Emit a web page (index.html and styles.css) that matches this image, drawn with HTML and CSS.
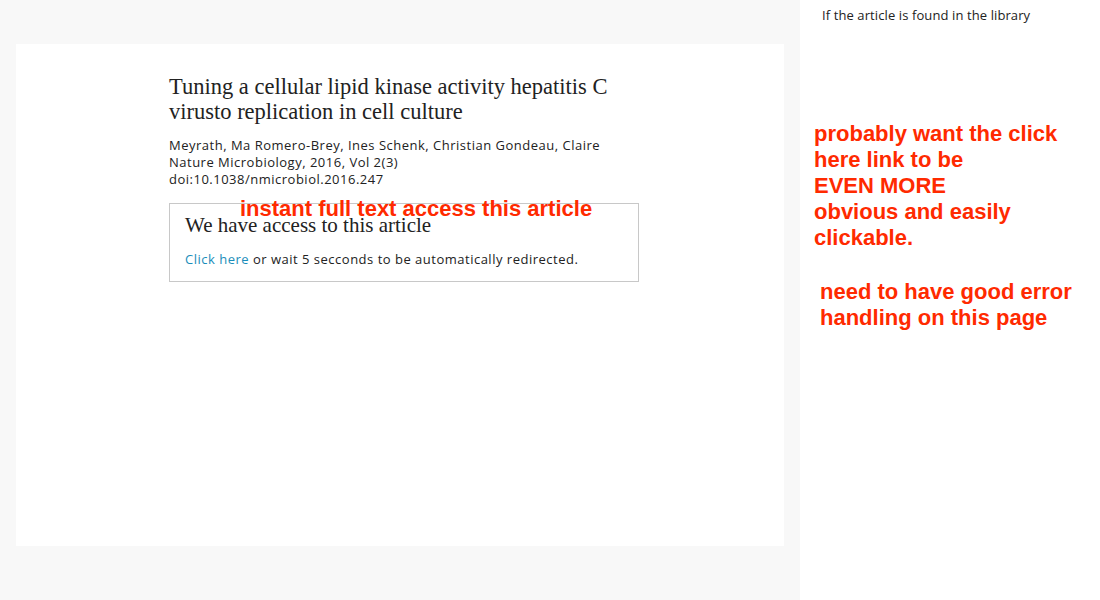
FILE: index.html
```html
<!DOCTYPE html>
<html>
<head>
<meta charset="utf-8">
<link rel="stylesheet" href="styles.css">
</head>
<body>
<div class="page">
  <main class="main">
    <section class="card">
      <div class="article">
        <h1 class="title">Tuning a cellular lipid kinase activity hepatitis C virusto replication in cell culture</h1>
        <div class="meta">
          <div>Meyrath, Ma Romero-Brey, Ines Schenk, Christian Gondeau, Claire</div>
          <div>Nature Microbiology, 2016, Vol 2(3)</div>
          <div>doi:10.1038/nmicrobiol.2016.247</div>
        </div>
        <div class="access">
          <span class="note note-box">instant full text access this article</span>
          <h2 class="access-title">We have access to this article</h2>
          <p class="access-text"><a class="link" href="#">Click here</a> or wait 5 secconds to be automatically redirected.</p>
        </div>
      </div>
    </section>
  </main>
  <aside class="side">
    <p class="side-label">If the article is found in the library</p>
    <p class="note note-side">probably want the click<br>here link to be<br>EVEN MORE<br>obvious and easily<br>clickable.</p>
    <p class="note note-side2">need to have good error<br>handling on this page</p>
  </aside>
</div>
</body>
</html>
```

FILE: styles.css
```css
html, body {
  margin: 0;
  padding: 0;
}
body {
  width: 1100px;
  height: 600px;
  overflow: hidden;
  background: #ffffff;
  font-family: "Open Sans", "Lato", sans-serif;
  color: #222;
}
.page {
  display: flex;
  height: 600px;
}
.main {
  width: 800px;
  background: #f8f8f8;
  padding: 44px 16px 54px 16px;
  box-sizing: border-box;
}
.card {
  background: #fff;
  height: 502px;
  width: 768px;
  padding-top: 30px;
  box-sizing: border-box;
}
.article {
  margin-left: 153px;
  width: 470px;
}
.title {
  font-family: "Liberation Serif", "DejaVu Serif", serif;
  font-weight: normal;
  font-size: 22.5px;
  line-height: 25px;
  color: #222;
  margin: 0 0 13px 0;
}
.meta {
  font-size: 13px;
  line-height: 17px;
  letter-spacing: 0.5px;
  color: #222;
}
.access {
  position: relative;
  margin-top: 15px;
  border: 1px solid #c8c8c8;
  padding: 8px 15px 13px 15px;
}
.access-title {
  font-family: "Liberation Serif", "DejaVu Serif", serif;
  font-weight: normal;
  font-size: 21px;
  line-height: 26px;
  margin: 0;
  color: #222;
}
.access-text {
  margin: 13px 0 0 0;
  font-size: 13px;
  line-height: 17px;
  letter-spacing: 0.5px;
}
.link {
  color: #1a8dba;
  text-decoration: none;
}
.note {
  font-family: "Liberation Sans", Arial, sans-serif;
  font-weight: bold;
  color: #ff2a00;
  font-size: 22px;
  line-height: 26px;
  margin: 0;
  letter-spacing: 0;
}
.note-box {
  position: absolute;
  left: 70px;
  top: -8px;
  white-space: nowrap;
}
.side {
  width: 300px;
  background: #fff;
  padding: 0 0 0 14px;
  box-sizing: border-box;
}
.side-label {
  margin: 7px 0 0 8px;
  font-size: 13px;
  line-height: 17px;
  letter-spacing: 0.1px;
  color: #222;
}
.note-side {
  margin-top: 97px;
}
.note-side2 {
  margin: 28px 0 0 6px;
}
```
